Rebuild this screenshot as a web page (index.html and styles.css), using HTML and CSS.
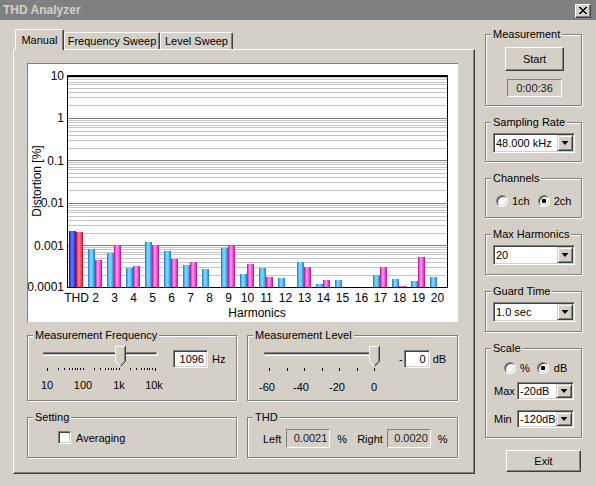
FILE: index.html
```html
<!DOCTYPE html>
<html lang="en">
<head>
    <meta charset="UTF-8">
    <title>THD Analyzer</title>
    <link rel="stylesheet" href="styles.css">
</head>
<body>
<div class="window">
    <div class="titlebar">
        <span class="title">THD Analyzer</span>
        <span class="close-btn">
            <svg width="8" height="7" viewBox="0 0 8 7" shape-rendering="crispEdges"><path d="M0 0h2v1H0zM6 0h2v1H6zM1 1h2v1H1zM5 1h2v1H5zM2 2h4v1H2zM3 3h2v1H3zM2 4h4v1H2zM1 5h2v1H1zM5 5h2v1H5zM0 6h2v1H0zM6 6h2v1H6z"/></svg>
        </span>
    </div>

    <div class="client">
        <div class="tabs">
            <div class="tab-strip">
                <div class="tab tab-active tab-manual">Manual</div>
                <div class="tab tab-freq">Frequency Sweep</div>
                <div class="tab tab-level">Level Sweep</div>
            </div>
            <div class="tab-panel">
                <div class="chart">
                    <svg width="430" height="258" viewBox="28 64 430 258">
                        <defs>
                            <linearGradient id="hb">
                                <stop offset="0" stop-color="#1c6cb8"/>
                                <stop offset="0.15" stop-color="#38a8e8"/>
                                <stop offset="0.4" stop-color="#8ad8fa"/>
                                <stop offset="0.6" stop-color="#70ccf4"/>
                                <stop offset="0.85" stop-color="#30a0e0"/>
                                <stop offset="1" stop-color="#1c70c0"/>
                            </linearGradient>
                            <linearGradient id="hp">
                                <stop offset="0" stop-color="#a0108c"/>
                                <stop offset="0.15" stop-color="#e040c8"/>
                                <stop offset="0.4" stop-color="#ff98ec"/>
                                <stop offset="0.6" stop-color="#f070dc"/>
                                <stop offset="0.85" stop-color="#d830c0"/>
                                <stop offset="1" stop-color="#a01090"/>
                            </linearGradient>
                            <linearGradient id="tb">
                                <stop offset="0" stop-color="#101890"/>
                                <stop offset="0.15" stop-color="#2838e0"/>
                                <stop offset="0.4" stop-color="#6878ff"/>
                                <stop offset="0.6" stop-color="#5060f8"/>
                                <stop offset="0.85" stop-color="#2838e0"/>
                                <stop offset="1" stop-color="#101890"/>
                            </linearGradient>
                            <linearGradient id="tr">
                                <stop offset="0" stop-color="#a01030"/>
                                <stop offset="0.15" stop-color="#e03050"/>
                                <stop offset="0.4" stop-color="#ff8898"/>
                                <stop offset="0.6" stop-color="#f86078"/>
                                <stop offset="0.85" stop-color="#e03050"/>
                                <stop offset="1" stop-color="#a01030"/>
                            </linearGradient>
                        </defs>

                        <!-- log grid, 5 decades -->
                        <path class="grid-minor" d="M68 77.5H447M68 79.5H447M68 82.5H447M68 84.5H447M68 88.5H447M68 92.5H447M68 97.5H447M68 105.5H447
                            M68 120.5H447M68 122.5H447M68 125.5H447M68 127.5H447M68 131.5H447M68 135.5H447M68 140.5H447M68 148.5H447
                            M68 162.5H447M68 164.5H447M68 167.5H447M68 169.5H447M68 173.5H447M68 177.5H447M68 182.5H447M68 190.5H447
                            M68 205.5H447M68 207.5H447M68 210.5H447M68 212.5H447M68 216.5H447M68 220.5H447M68 225.5H447M68 233.5H447
                            M68 247.5H447M68 249.5H447M68 252.5H447M68 254.5H447M68 258.5H447M68 262.5H447M68 267.5H447M68 275.5H447"/>
                        <path class="grid-major" d="M68 118.5H447M68 160.5H447M68 203.5H447M68 245.5H447"/>

                        <!-- left = blue, right = pink -->
                        <g class="bars">
                            <rect x="69" y="231" width="7" height="56" fill="url(#tb)"/>
                            <rect x="76" y="232" width="7" height="55" fill="url(#tr)"/>
                            <rect x="88" y="249" width="7" height="38" fill="url(#hb)"/>
                            <rect x="95" y="260" width="7" height="27" fill="url(#hp)"/>
                            <rect x="107" y="253" width="7" height="34" fill="url(#hb)"/>
                            <rect x="114" y="245" width="7" height="42" fill="url(#hp)"/>
                            <rect x="126" y="268" width="7" height="19" fill="url(#hb)"/>
                            <rect x="133" y="266" width="7" height="21" fill="url(#hp)"/>
                            <rect x="145" y="242" width="7" height="45" fill="url(#hb)"/>
                            <rect x="152" y="245" width="7" height="42" fill="url(#hp)"/>
                            <rect x="164" y="251" width="7" height="36" fill="url(#hb)"/>
                            <rect x="171" y="259" width="7" height="28" fill="url(#hp)"/>
                            <rect x="183" y="265" width="7" height="22" fill="url(#hb)"/>
                            <rect x="190" y="262" width="7" height="25" fill="url(#hp)"/>
                            <rect x="202" y="269" width="7" height="18" fill="url(#hb)"/>
                            <rect x="221" y="248" width="7" height="39" fill="url(#hb)"/>
                            <rect x="228" y="246" width="7" height="41" fill="url(#hp)"/>
                            <rect x="240" y="274" width="7" height="13" fill="url(#hb)"/>
                            <rect x="247" y="264" width="7" height="23" fill="url(#hp)"/>
                            <rect x="259" y="268" width="7" height="19" fill="url(#hb)"/>
                            <rect x="266" y="277" width="7" height="10" fill="url(#hp)"/>
                            <rect x="278" y="278" width="7" height="9" fill="url(#hb)"/>
                            <rect x="297" y="262" width="7" height="25" fill="url(#hb)"/>
                            <rect x="304" y="267" width="7" height="20" fill="url(#hp)"/>
                            <rect x="316" y="284" width="7" height="3" fill="url(#hb)"/>
                            <rect x="323" y="280" width="7" height="7" fill="url(#hp)"/>
                            <rect x="335" y="280" width="7" height="7" fill="url(#hb)"/>
                            <rect x="373" y="275" width="7" height="12" fill="url(#hb)"/>
                            <rect x="380" y="267" width="7" height="20" fill="url(#hp)"/>
                            <rect x="392" y="279" width="7" height="8" fill="url(#hb)"/>
                            <rect x="399" y="286" width="7" height="1" fill="url(#hp)"/>
                            <rect x="411" y="281" width="7" height="6" fill="url(#hb)"/>
                            <rect x="418" y="257" width="7" height="30" fill="url(#hp)"/>
                            <rect x="430" y="277" width="7" height="10" fill="url(#hb)"/>
                        </g>

                        <rect class="axis" x="67.5" y="75.5" width="380" height="212"/>
                        <path class="axis" d="M67 76.5H448"/>

                        <g class="y-labels">
                            <text x="64" y="80">10</text>
                            <text x="64" y="122">1</text>
                            <text x="64" y="165">0.1</text>
                            <text x="64" y="207">0.01</text>
                            <text x="64" y="250">0.001</text>
                            <text x="64" y="291">0.0001</text>
                        </g>
                        <g class="x-labels">
                            <text x="76.5" y="302">THD</text>
                            <text x="95.5" y="302">2</text>
                            <text x="114.5" y="302">3</text>
                            <text x="133.5" y="302">4</text>
                            <text x="152.5" y="302">5</text>
                            <text x="171.5" y="302">6</text>
                            <text x="190.5" y="302">7</text>
                            <text x="209.5" y="302">8</text>
                            <text x="228.5" y="302">9</text>
                            <text x="247.5" y="302">10</text>
                            <text x="266.5" y="302">11</text>
                            <text x="285.5" y="302">12</text>
                            <text x="304.5" y="302">13</text>
                            <text x="323.5" y="302">14</text>
                            <text x="342.5" y="302">15</text>
                            <text x="361.5" y="302">16</text>
                            <text x="380.5" y="302">17</text>
                            <text x="399.5" y="302">18</text>
                            <text x="418.5" y="302">19</text>
                            <text x="437.5" y="302">20</text>
                            <text x="257" y="317">Harmonics</text>
                        </g>
                        <text class="axis-title" transform="translate(41,181) rotate(-90)">Distortion [%]</text>
                    </svg>
                </div>

                <div class="controls">
                    <div class="group">
                        <div class="group-title">Measurement Frequency</div>
                        <div class="slider-row">
                            <svg class="slider" width="130" height="50">
                                <g shape-rendering="crispEdges" fill="none">
                                    <path d="M7 9.5H121M7.5 9V12" stroke="#808080"/>
                                    <path d="M8 10.5H120" stroke="#404040"/>
                                    <path d="M7 12.5H122M121.5 9V13" stroke="#fff"/>
                                </g>
                                <g class="ticks">
                                    <rect x="11" y="25" width="1" height="3"/>
                                    <rect x="22" y="25" width="1" height="2"/>
                                    <rect x="28" y="25" width="1" height="2"/>
                                    <rect x="33" y="25" width="1" height="2"/>
                                    <rect x="36" y="25" width="1" height="2"/>
                                    <rect x="39" y="25" width="1" height="2"/>
                                    <rect x="41" y="25" width="1" height="2"/>
                                    <rect x="44" y="25" width="1" height="2"/>
                                    <rect x="47" y="25" width="1" height="2"/>
                                    <rect x="58" y="25" width="1" height="2"/>
                                    <rect x="64" y="25" width="1" height="2"/>
                                    <rect x="69" y="25" width="1" height="2"/>
                                    <rect x="72" y="25" width="1" height="2"/>
                                    <rect x="75" y="25" width="1" height="2"/>
                                    <rect x="77" y="25" width="1" height="2"/>
                                    <rect x="80" y="25" width="1" height="2"/>
                                    <rect x="83" y="25" width="1" height="2"/>
                                    <rect x="94" y="25" width="1" height="2"/>
                                    <rect x="100" y="25" width="1" height="2"/>
                                    <rect x="105" y="25" width="1" height="2"/>
                                    <rect x="108" y="25" width="1" height="2"/>
                                    <rect x="111" y="25" width="1" height="2"/>
                                    <rect x="113" y="25" width="1" height="2"/>
                                    <rect x="116" y="25" width="1" height="2"/>
                                    <rect x="119" y="25" width="1" height="3"/>
                                </g>
                                <g class="thumb" transform="translate(79,0)">
                                    <polygon points="0,3 11,3 11,18 5.5,23.5 0,18" fill="#d4d0c8"/>
                                    <path d="M0.5 18.5V3.5H10M0.5 18.5L5.5 23.5" stroke="#fff" fill="none"/>
                                    <path d="M10.5 3V18.5L5.5 23.5" stroke="#404040" fill="none"/>
                                    <path d="M9.5 4V18L5.5 22" stroke="#808080" fill="none"/>
                                </g>
                                <g class="slider-labels">
                                    <text x="11" y="46">10</text>
                                    <text x="47" y="46">100</text>
                                    <text x="83" y="46">1k</text>
                                    <text x="118" y="46">10k</text>
                                </g>
                            </svg>
                            <div class="field field-freq">1096</div>
                            <span class="unit unit-hz">Hz</span>
                        </div>
                    </div>

                    <div class="group">
                        <div class="group-title">Measurement Level</div>
                        <div class="slider-row">
                            <svg class="slider" width="130" height="50">
                                <g shape-rendering="crispEdges" fill="none">
                                    <path d="M8 9.5H122M8.5 9V12" stroke="#808080"/>
                                    <path d="M9 10.5H121" stroke="#404040"/>
                                    <path d="M8 12.5H123M122.5 9V13" stroke="#fff"/>
                                </g>
                                <g class="ticks">
                                    <rect x="13" y="25" width="1" height="3"/>
                                    <rect x="31" y="25" width="1" height="3"/>
                                    <rect x="48" y="25" width="1" height="3"/>
                                    <rect x="66" y="25" width="1" height="3"/>
                                    <rect x="83" y="25" width="1" height="3"/>
                                    <rect x="101" y="25" width="1" height="3"/>
                                    <rect x="118" y="25" width="1" height="3"/>
                                </g>
                                <g class="thumb" transform="translate(113,0)">
                                    <polygon points="0,3 11,3 11,18 5.5,23.5 0,18" fill="#d4d0c8"/>
                                    <path d="M0.5 18.5V3.5H10M0.5 18.5L5.5 23.5" stroke="#fff" fill="none"/>
                                    <path d="M10.5 3V18.5L5.5 23.5" stroke="#404040" fill="none"/>
                                    <path d="M9.5 4V18L5.5 22" stroke="#808080" fill="none"/>
                                </g>
                                <g class="slider-labels">
                                    <text x="11" y="48">-60</text>
                                    <text x="45" y="48">-40</text>
                                    <text x="81" y="48">-20</text>
                                    <text x="118" y="48">0</text>
                                </g>
                            </svg>
                            <span class="unit unit-minus">-</span>
                            <div class="field field-level">0</div>
                            <span class="unit unit-db">dB</span>
                        </div>
                    </div>

                    <div class="group">
                        <div class="group-title">Setting</div>
                        <div class="check-row">
                            <span class="checkbox"></span>
                            <span class="check-label">Averaging</span>
                        </div>
                    </div>

                    <div class="group">
                        <div class="group-title">THD</div>
                        <div class="thd-row">
                            <span>Left</span>
                            <span class="value value-left">0.0021</span>
                            <span class="pct">%</span>
                            <span class="right-label">Right</span>
                            <span class="value value-right">0.0020</span>
                            <span class="pct">%</span>
                        </div>
                    </div>
                </div>
            </div>
        </div>

        <div class="side">
            <div class="group group-meas">
                <div class="group-title">Measurement</div>
                <div class="meas-body">
                    <div class="button start-btn">Start</div>
                    <div class="value timer">0:00:36</div>
                </div>
            </div>

            <div class="group group-40">
                <div class="group-title">Sampling Rate</div>
                <div class="combo">
                    <span class="combo-text">48.000 kHz</span>
                    <span class="combo-btn"></span>
                </div>
            </div>

            <div class="group group-40">
                <div class="group-title">Channels</div>
                <div class="radio-row radio-row-ch">
                    <span class="radio"></span>
                    <span class="radio-label">1ch</span>
                    <span class="radio on radio-second"></span>
                    <span class="radio-label">2ch</span>
                </div>
            </div>

            <div class="group group-41">
                <div class="group-title">Max Harmonics</div>
                <div class="combo">
                    <span class="combo-text">20</span>
                    <span class="combo-btn"></span>
                </div>
            </div>

            <div class="group group-41">
                <div class="group-title">Guard Time</div>
                <div class="combo">
                    <span class="combo-text">1.0 sec</span>
                    <span class="combo-btn"></span>
                </div>
            </div>

            <div class="group group-scale">
                <div class="group-title">Scale</div>
                <div class="radio-row radio-row-scale">
                    <span class="radio"></span>
                    <span class="radio-label">%</span>
                    <span class="radio on radio-db"></span>
                    <span class="radio-label radio-label-db">dB</span>
                </div>
                <div class="scale-row scale-row-max">
                    <span class="scale-label">Max</span>
                    <div class="combo combo-small">
                        <span class="combo-text">-20dB</span>
                        <span class="combo-btn"></span>
                    </div>
                </div>
                <div class="scale-row scale-row-min">
                    <span class="scale-label">Min</span>
                    <div class="combo combo-small">
                        <span class="combo-text">-120dB</span>
                        <span class="combo-btn"></span>
                    </div>
                </div>
            </div>

            <div class="button exit-btn">Exit</div>
        </div>
    </div>
</div>
</body>
</html>
```

FILE: styles.css
```css
body {
    margin: 0;
    font-family: "Liberation Sans", Arial, sans-serif;
    font-size: 11px;
    color: #000;
    background: #d4d0c8;
}
.window {
    width: 596px;
    height: 486px;
    background: #d4d0c8;
    overflow: hidden;
}

/* title bar */
.titlebar {
    height: 20px;
    background: #808080;
    display: flex;
    align-items: center;
    justify-content: space-between;
    padding: 0 5px 0 3px;
}
.title {
    color: #d4d0c8;
    font-weight: bold;
    font-size: 12px;
}
.close-btn {
    box-sizing: border-box;
    width: 16px;
    height: 14px;
    margin-top: 1px;
    background: #d4d0c8;
    border: 1px solid;
    border-color: #fff #404040 #404040 #fff;
    box-shadow: inset -1px -1px #808080;
    display: flex;
    align-items: center;
    justify-content: center;
}
.close-btn svg {
    display: block;
    margin-left: -1px;
}

.client {
    display: flex;
    gap: 10px;
    padding: 9px 0 0 13px;
}

/* tabs */
.tab-strip {
    display: flex;
    align-items: flex-end;
    height: 20px;
}
.tab {
    box-sizing: border-box;
    height: 17px;
    padding-top: 2px;
    line-height: 13px;
    text-align: center;
    background: #d4d0c8;
    border: 1px solid;
    border-bottom: none;
    border-color: #fff #404040 transparent #fff;
    border-radius: 2px 2px 0 0;
    box-shadow: inset -1px 0 #808080;
}
.tab-active {
    height: 21px;
    padding-top: 4px;
    margin-bottom: -1px;
    position: relative;
    z-index: 1;
}
.tab-manual {
    width: 49px;
    margin-left: 2px;
}
.tab-freq {
    width: 96px;
}
.tab-level {
    width: 73px;
}
.tab-panel {
    box-sizing: border-box;
    width: 462px;
    height: 425px;
    padding: 13px 0 0 13px;
    border: 1px solid;
    border-color: #fff #404040 #404040 #fff;
    box-shadow: inset -1px -1px #808080;
}

/* chart */
.chart {
    box-sizing: border-box;
    width: 431px;
    height: 259px;
    background: #fff;
    border-top: 1px solid #808080;
    border-left: 1px solid #808080;
}
.chart svg {
    display: block;
    font-family: "Liberation Sans", Arial, sans-serif;
    font-size: 12px;
}
.grid-minor {
    stroke: #c4c4c4;
    fill: none;
}
.grid-major {
    stroke: #808080;
    fill: none;
}
.axis {
    stroke: #000;
    fill: none;
}
.y-labels text {
    text-anchor: end;
}
.x-labels text,
.axis-title {
    text-anchor: middle;
}

/* group boxes */
.group {
    box-sizing: border-box;
    border: 1px solid #808080;
    box-shadow: inset 1px 1px #fff, 1px 1px #fff;
}
.group-title {
    width: fit-content;
    margin: -7px 0 0 5px;
    padding: 0 2px;
    line-height: 13px;
    background: #d4d0c8;
}
.controls {
    display: grid;
    grid-template-columns: 210px 211px;
    grid-template-rows: 66px 41px;
    column-gap: 10px;
    row-gap: 16px;
    margin-top: 13px;
}

/* sliders */
.slider-row {
    display: flex;
    align-items: flex-start;
    padding: 1px 0 0 8px;
}
.slider {
    display: block;
    flex: none;
}
.slider text {
    font-family: "Liberation Sans", Arial, sans-serif;
    font-size: 11px;
    text-anchor: middle;
}
.ticks rect {
    fill: #000;
}
.field {
    box-sizing: border-box;
    height: 18px;
    margin-top: 7px;
    padding-right: 3px;
    line-height: 16px;
    text-align: right;
    background: #fff;
    border: 1px solid;
    border-color: #808080 #fff #fff #808080;
    box-shadow: inset 1px 1px #404040, inset -1px -1px #d4d0c8;
}
.field-freq {
    width: 35px;
    margin-left: 7px;
}
.field-level {
    width: 26px;
    margin-left: 1px;
}
.unit {
    margin-top: 7px;
    line-height: 18px;
}
.unit-hz {
    margin-left: 4px;
}
.unit-minus {
    margin-left: 13px;
}
.unit-db {
    margin-left: 3px;
}

/* setting / thd */
.check-row {
    display: flex;
    align-items: center;
    margin: 7px 0 0 30px;
}
.checkbox {
    box-sizing: border-box;
    width: 13px;
    height: 13px;
    background: #fff;
    border: 1px solid;
    border-color: #808080 #fff #fff #808080;
    box-shadow: inset 1px 1px #404040, inset -1px -1px #d4d0c8;
}
.check-label {
    margin-left: 5px;
}
.thd-row {
    display: flex;
    align-items: center;
    margin: 5px 0 0 15px;
}
.value {
    box-sizing: border-box;
    height: 19px;
    padding-right: 2px;
    line-height: 17px;
    text-align: right;
    color: #202020;
    border: 1px solid;
    border-color: #808080 #fff #fff #808080;
}
.value-left,
.value-right {
    width: 44px;
}
.value-left {
    margin-left: 5px;
}
.value-right {
    margin-left: 4px;
}
.pct {
    margin-left: 7px;
}
.right-label {
    margin-left: 10px;
}

/* right column */
.side {
    width: 97px;
    padding-top: 5px;
}
.side .group + .group {
    margin-top: 16px;
}
.group-meas {
    height: 72px;
}
.group-40 {
    height: 40px;
}
.group-41 {
    height: 41px;
}
.group-scale {
    height: 90px;
}
.button {
    box-sizing: border-box;
    display: flex;
    align-items: center;
    justify-content: center;
    background: #d4d0c8;
    border: 1px solid;
    border-color: #fff #404040 #404040 #fff;
    box-shadow: inset -1px -1px #808080;
}
.meas-body {
    display: flex;
    flex-direction: column;
    align-items: center;
    padding-left: 2px;
}
.start-btn {
    width: 59px;
    height: 24px;
    margin-top: 6px;
}
.timer {
    width: 55px;
    height: 18px;
    margin-top: 8px;
    line-height: 16px;
    padding: 0;
    text-align: center;
}
.exit-btn {
    width: 75px;
    height: 22px;
    margin: 12px 0 0 21px;
}

/* combo boxes */
.combo {
    box-sizing: border-box;
    display: flex;
    width: 82px;
    height: 20px;
    margin: 4px 0 0 7px;
    padding: 1px;
    background: #fff;
    border: 1px solid;
    border-color: #808080 #fff #fff #808080;
    box-shadow: inset 1px 1px #404040, inset -1px -1px #d4d0c8;
}
.combo-text {
    flex: 1;
    padding-left: 1px;
    line-height: 16px;
    white-space: nowrap;
}
.combo-btn {
    box-sizing: border-box;
    width: 16px;
    display: flex;
    align-items: center;
    justify-content: center;
    background: #d4d0c8;
    border: 1px solid;
    border-color: #d4d0c8 #404040 #404040 #d4d0c8;
    box-shadow: inset 1px 1px #fff, inset -1px -1px #808080;
}
.combo-btn::after {
    content: "";
    width: 7px;
    height: 4px;
    background: #000;
    clip-path: polygon(0 0, 100% 0, 50% 100%);
}
.combo-small {
    width: 57px;
    height: 18px;
    margin: 0;
}
.combo-small .combo-text {
    line-height: 14px;
}

/* radios */
.radio-row {
    display: flex;
    align-items: center;
}
.radio-row-ch {
    margin: 10px 0 0 10px;
}
.radio-row-scale {
    margin: 7px 0 0 18px;
}
.radio {
    box-sizing: border-box;
    width: 12px;
    height: 12px;
    border-radius: 50%;
    background: #fff;
    border: 1px solid;
    border-color: #808080 #fff #fff #808080;
    box-shadow: inset 1px 1px #404040, inset -1px -1px #d4d0c8;
}
.radio.on {
    background: radial-gradient(circle, #000 0 2px, #fff 2.6px);
}
.radio-label {
    margin-left: 4px;
}
.radio-second {
    margin-left: 8px;
}
.radio-db {
    margin-left: 7px;
}
.radio-label-db {
    margin-left: 5px;
}
.scale-row {
    display: flex;
    align-items: center;
    margin-left: 8px;
}
.scale-row-max {
    margin-top: 8px;
}
.scale-row-min {
    margin-top: 10px;
}
.scale-label {
    width: 23px;
}
```
